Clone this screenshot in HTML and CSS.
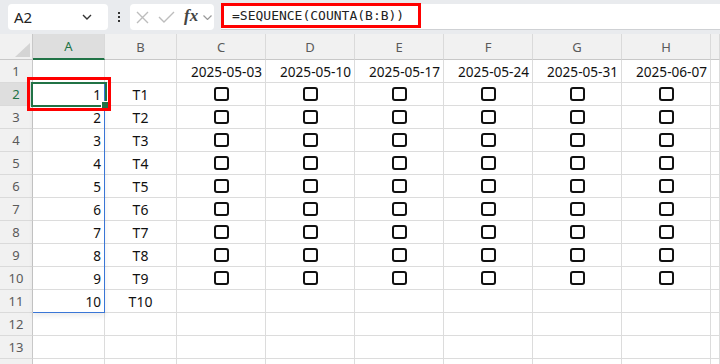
FILE: index.html
```html
<!DOCTYPE html>
<html>
<head>
  <link rel="stylesheet" href="styles.css">
</head>
<body>
  <div class="toolbar">
    <div class="name-box">
      <span>A2</span>
      <svg width="10" height="6" viewBox="0 0 10 6"><path d="M1 1l4 4 4-4" fill="none" stroke="#333" stroke-width="1.4"/></svg>
    </div>
    <div class="more-dots"><i></i><i></i><i></i></div>
    <div class="fx-group">
      <svg width="13" height="13" viewBox="0 0 13 13"><path d="M1 1l11 11M12 1L1 12" stroke="#bdbdbd" stroke-width="1.4"/></svg>
      <svg width="17" height="12" viewBox="0 0 17 12"><path d="M1 6l5 5L16 1" fill="none" stroke="#bdbdbd" stroke-width="1.4"/></svg>
      <span class="fx">fx</span>
      <svg width="9" height="5" viewBox="0 0 9 5"><path d="M0.5 0.5l4 4 4-4" fill="none" stroke="#999" stroke-width="1.2"/></svg>
    </div>
    <div class="formula">
      <span class="formula-text">=SEQUENCE(COUNTA(B:B))</span>
    </div>
  </div>

  <div class="sheet" id="sheet">
    <div class="spill"></div>
    <div class="active-cell"><span class="handle"></span></div>
    <div class="highlight"></div>
  </div>

  <script>
    // build the worksheet grid
    const sheet = document.getElementById('sheet');
    const letters = ['A', 'B', 'C', 'D', 'E', 'F', 'G', 'H', ''];
    const dates = ['2025-05-03', '2025-05-10', '2025-05-17', '2025-05-24', '2025-05-31', '2025-06-07'];

    function cell(cls, text) {
      const el = document.createElement('div');
      el.className = cls;
      if (text !== undefined) el.textContent = text;
      sheet.appendChild(el);
      return el;
    }

    // header row
    cell('corner');
    letters.forEach((l, i) => cell('col-head' + (i === 0 ? ' selected' : ''), l));

    for (let r = 1; r <= 14; r++) {
      // row 14 only peeks in at the bottom edge
      cell('row-head' + (r === 2 ? ' selected' : ''), r < 14 ? r : '');
      if (r === 1) {
        cell('cell');
        cell('cell');
        dates.forEach(d => cell('cell num', d));
        cell('cell');
        continue;
      }
      const n = r - 1;
      cell('cell num', n <= 10 ? n : '');
      cell('cell center', n <= 10 ? 'T' + n : '');
      for (let c = 0; c < 6; c++) {
        const el = cell('cell center');
        if (n <= 9) {
          const box = document.createElement('span');
          box.className = 'checkbox';
          el.appendChild(box);
        }
      }
      cell('cell');
    }
  </script>
</body>
</html>
```

FILE: styles.css
```css
body {
  margin: 0;
  background: #fff;
  font-family: 'Noto Sans', sans-serif;
  overflow: hidden;
}

/* formula bar */
.toolbar {
  height: 34px;
  background: #e9ebee;
  display: flex;
  align-items: flex-start;
  padding: 4px 0 0 8px;
  box-sizing: border-box;
}

.name-box {
  width: 100px;
  height: 26px;
  background: #fff;
  border-radius: 4px;
  box-sizing: border-box;
  display: flex;
  align-items: center;
  justify-content: space-between;
  padding: 0 16px 0 6px;
  font-size: 15px;
  color: #222;
}

.more-dots {
  width: 22px;
  height: 26px;
  display: flex;
  flex-direction: column;
  align-items: center;
  justify-content: center;
  gap: 2px;
}

.more-dots i {
  width: 2px;
  height: 2px;
  background: #333;
}

.fx-group {
  width: 84px;
  height: 26px;
  background: #fff;
  border-radius: 4px;
  display: flex;
  align-items: center;
  padding-left: 6px;
  box-sizing: border-box;
}

.fx-group svg:nth-child(2) {
  margin-left: 9px;
}

.fx {
  font-family: 'Liberation Serif', serif;
  font-style: italic;
  font-weight: bold;
  font-size: 17px;
  color: #444;
  margin: -3px 0 0 9px;
}

.fx-group svg:last-child {
  margin-left: 5px;
}

.formula {
  flex: 1;
  height: 26px;
  margin-left: 7px;
  background: #fff;
  border-bottom: 1px solid #cfd1d4;
  box-sizing: border-box;
}

.formula-text {
  display: flex;
  align-items: center;
  width: 200px;
  height: 25px;
  margin-top: -1px;
  padding-left: 8px;
  box-sizing: border-box;
  border: 3px solid #f00;
  font-family: 'DejaVu Sans Mono', monospace;
  font-size: 13px;
  color: #222;
}

/* worksheet */
.sheet {
  position: relative;
  display: grid;
  grid-template-columns: 33px 72px 72px repeat(6, 89px) 1fr;
  grid-template-rows: 26px;
  grid-auto-rows: 23px;
  font-size: 14px;
  color: #111;
}

.corner,
.col-head,
.row-head {
  background: #f1f1f1;
  color: #5a5a5a;
  font-size: 13px;
  display: flex;
  align-items: center;
  justify-content: center;
  box-sizing: border-box;
}

.corner {
  position: relative;
  border-right: 1px solid #c8c8c8;
  border-bottom: 1px solid #c8c8c8;
}

.corner:after {
  content: "";
  position: absolute;
  right: 2px;
  bottom: 2px;
  width: 15px;
  height: 14px;
  background: #d4d4d4;
  clip-path: polygon(100% 0, 100% 100%, 0 100%);
}

.col-head {
  border-right: 1px solid #dadada;
  border-bottom: 1px solid #c8c8c8;
}

.col-head.selected {
  background: #dedede;
  color: #217346;
  border-bottom: 2px solid #217346;
}

.row-head {
  border-right: 1px solid #c8c8c8;
  border-bottom: 1px solid #dadada;
}

.row-head.selected {
  background: #dedede;
  color: #217346;
}

.cell {
  border-right: 1px solid #dcdcdc;
  border-bottom: 1px solid #dcdcdc;
  box-sizing: border-box;
  display: flex;
  align-items: center;
  white-space: nowrap;
  overflow: hidden;
}

.num {
  justify-content: flex-end;
  padding-right: 3px;
  font-size: 13.6px;
}

.center {
  justify-content: center;
}

.checkbox {
  width: 15px;
  height: 14px;
  border: 2px solid #111;
  border-radius: 3px;
  box-sizing: border-box;
}

/* overlays */
.spill {
  position: absolute;
  grid-column: 2 / 3;
  grid-row: 3 / 13;
  inset: 0;
  border-right: 1px solid #3a76d6;
  border-bottom: 1px solid #3a76d6;
  box-shadow: 0 3px 5px rgba(0, 0, 0, 0.08);
  z-index: 1;
  pointer-events: none;
}

.active-cell {
  position: absolute;
  grid-column: 2 / 3;
  grid-row: 3 / 4;
  inset: -1px -2px -1px -2px;
  border: 2px solid #217346;
  z-index: 2;
}

.handle {
  position: absolute;
  right: -4px;
  bottom: -4px;
  width: 6px;
  height: 6px;
  background: #217346;
  border: 1px solid #fff;
}

.highlight {
  position: absolute;
  grid-column: 2 / 3;
  grid-row: 3 / 4;
  inset: -6px -6px -5px -6px;
  border: 3px solid #f00;
  z-index: 3;
}
```
